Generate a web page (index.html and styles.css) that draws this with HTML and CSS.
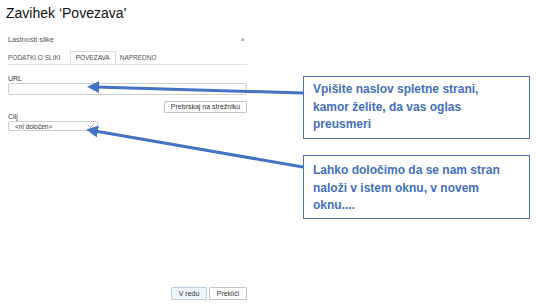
FILE: index.html
```html
<!DOCTYPE html>
<html lang="sl">

<head>
  <meta charset="UTF-8">
  <meta name="viewport" content="width=device-width, initial-scale=1.0">
  <title>Zavihek Povezava</title>
  <link rel="stylesheet" href="styles.css">
</head>

<body>
  <h1 class="title">Zavihek ‘Povezava’</h1>

  <div class="dialog">
    <div class="dialog-head">
      <span>Lastnosti slike</span>
      <span class="close">×</span>
    </div>

    <div class="tabs">
      <span class="tab">PODATKI O SLIKI</span>
      <span class="tab active">POVEZAVA</span>
      <span class="tab">NAPREDNO</span>
    </div>

    <div class="field field-url">
      <label class="label">URL</label>
      <div class="input"></div>
    </div>

    <div class="browse-row">
      <button class="btn">Prebrskaj na strežniku</button>
    </div>

    <div class="field field-target">
      <label class="label">Cilj</label>
      <div class="select">
        <span>&lt;ni določen&gt;</span>
        <svg class="chevron" width="7" height="4" viewBox="0 0 7 4">
          <path d="M0.5 0.5 L3.5 3.5 L6.5 0.5" fill="none" stroke="#8a8a8a" stroke-width="0.8"/>
        </svg>
      </div>
    </div>

    <div class="footer">
      <button class="btn btn-ok">V redu</button>
      <button class="btn">Prekliči</button>
    </div>
  </div>

  <div class="note note-url">Vpišite naslov spletne strani, kamor želite, da vas oglas preusmeri</div>
  <div class="note note-target">Lahko določimo da se nam stran naloži v istem oknu, v novem oknu....</div>

  <svg class="arrows" width="537" height="306" viewBox="0 0 537 306">
    <defs>
      <marker id="head" markerWidth="4" markerHeight="4" refX="1" refY="2" orient="auto-start-reverse" markerUnits="strokeWidth">
        <path d="M0 0 L4 2 L0 4 Z" fill="#4472c4"/>
      </marker>
    </defs>
    <line x1="303" y1="93" x2="96" y2="87" stroke="#4472c4" stroke-width="3" marker-end="url(#head)"/>
    <line x1="303" y1="167" x2="95" y2="131" stroke="#4472c4" stroke-width="3" marker-end="url(#head)"/>
  </svg>
</body>

</html>
```

FILE: styles.css
```css
body {
  margin: 0;
  width: 537px;
  height: 306px;
  position: relative;
  overflow: hidden;
  background: #fff;
  font-family: "Liberation Sans", Arial, sans-serif;
}

.title {
  margin: 5px 0 0 6px;
  font-size: 14px;
  font-weight: normal;
  line-height: 17px;
  color: #111;
}

.dialog {
  margin: 13px 0 0 8px;
  width: 239px;
}

.dialog-head {
  display: flex;
  justify-content: space-between;
  align-items: center;
  height: 10px;
  font-size: 7.3px;
  line-height: 10px;
  color: #555;
}

.close {
  font-size: 8px;
  color: #777;
  margin-right: 2px;
}

.tabs {
  display: flex;
  align-items: flex-end;
  margin-top: 6px;
  height: 13px;
  border-bottom: 1px solid #e4e4e4;
}

.tab {
  font-size: 6.5px;
  line-height: 12px;
  color: #555;
  padding: 0 5px 0 0;
  margin-right: 9px;
  white-space: nowrap;
}

.tab.active {
  color: #444;
  padding: 0 5px;
  margin-left: -5px;
  margin-right: 4px;
  border: 1px solid #dcdcdc;
  border-bottom: none;
  background: #fff;
}

.field-url {
  margin-top: 9px;
}

.label {
  display: block;
  font-size: 7px;
  line-height: 9px;
  color: #333;
}

.input {
  height: 10px;
  border: 1px solid #cfcfcf;
  border-radius: 2px;
}

.browse-row {
  display: flex;
  justify-content: flex-end;
  margin-top: 6px;
}

.btn {
  box-sizing: border-box;
  font-family: "Liberation Sans", Arial, sans-serif;
  font-size: 7px;
  line-height: 10px;
  height: 12px;
  padding: 0;
  color: #333;
  background: #fff;
  border: 1px solid #c4c4c4;
  border-radius: 1px;
  white-space: nowrap;
}

.browse-row .btn {
  width: 83px;
}

.field-target .label {
  line-height: 8px;
}

.select {
  box-sizing: border-box;
  width: 90px;
  height: 10px;
  display: flex;
  align-items: center;
  justify-content: space-between;
  padding: 0 3px 0 6px;
  border: 1px solid #cfcfcf;
  border-radius: 2px;
  font-size: 6.5px;
  color: #333;
}

.footer {
  display: flex;
  justify-content: flex-end;
  gap: 2px;
  margin-top: 156px;
}

.footer .btn {
  height: 13px;
}

.btn-ok {
  width: 36px;
  background: #eef5fb;
  border-color: #bfd0e0;
}

.footer .btn:last-child {
  width: 38px;
}

.note {
  position: absolute;
  left: 303px;
  box-sizing: border-box;
  width: 227px;
  border: 1.5px solid #4a72b8;
  background: #fff;
  color: #4470be;
  font-size: 12px;
  font-weight: bold;
  line-height: 17.5px;
  padding-left: 9px;
  padding-right: 22px;
}

.note-url {
  top: 76px;
  height: 63px;
  padding-top: 4px;
  overflow: hidden;
}

.note-target {
  top: 155px;
  height: 64px;
  padding-top: 6px;
}

.arrows {
  position: absolute;
  left: 0;
  top: 0;
  pointer-events: none;
}
```
